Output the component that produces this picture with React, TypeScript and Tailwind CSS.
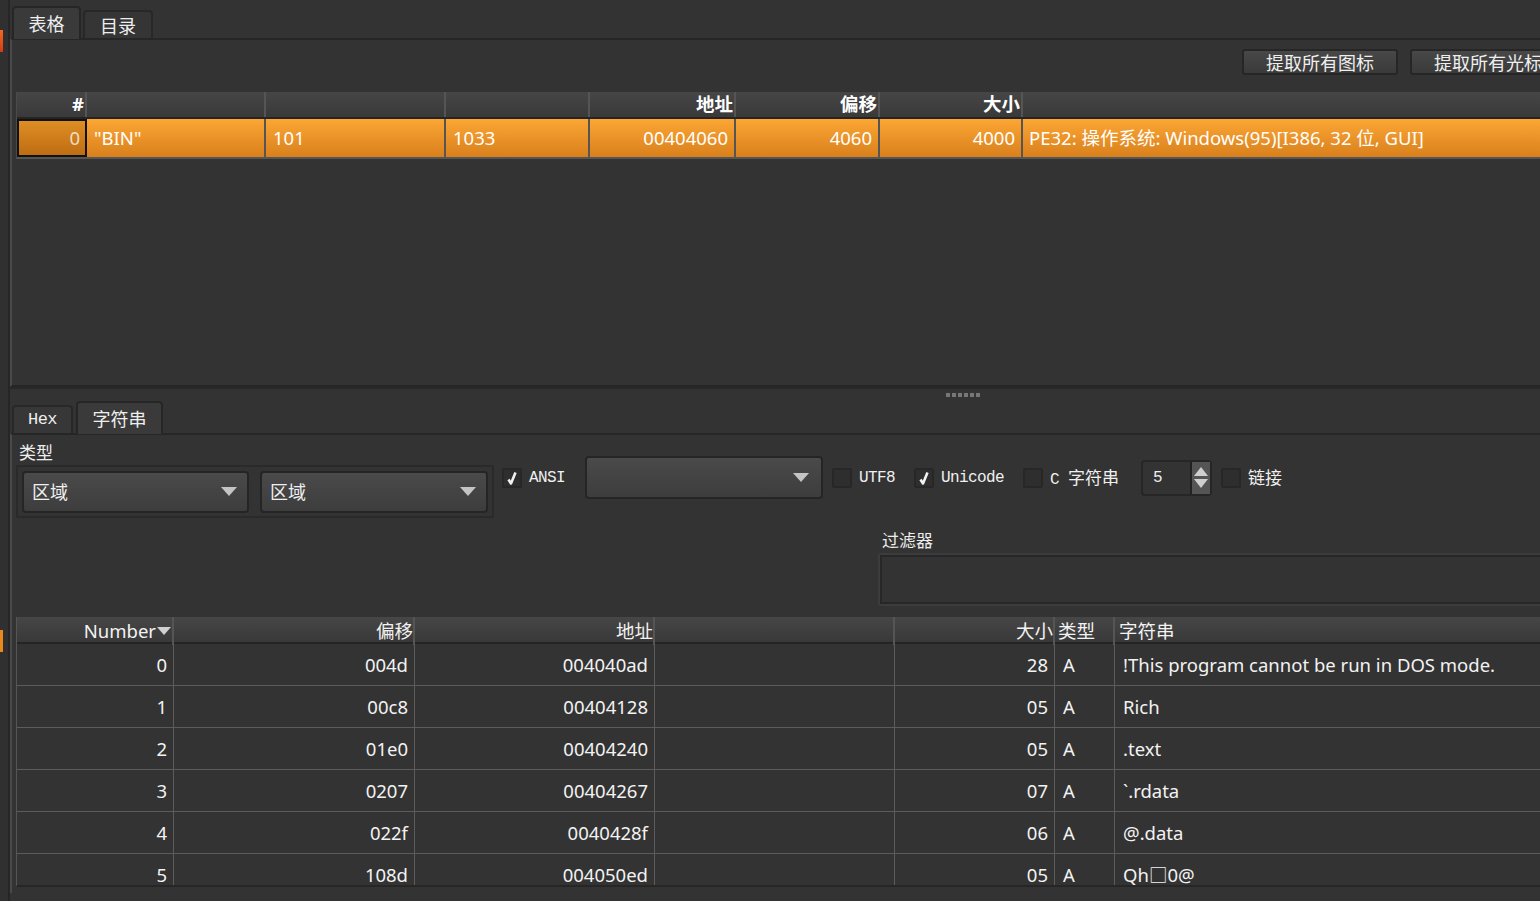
import React from "react";

const topCols = "grid-cols-[70px_179px_180px_144px_146px_144px_143px_1fr]";
const botCols = "grid-cols-[157px_241px_240px_240px_160px_60px_1fr]";

const strings = [
  { n: "0", off: "004d", addr: "004040ad", size: "28", s: "!This program cannot be run in DOS mode." },
  { n: "1", off: "00c8", addr: "00404128", size: "05", s: "Rich" },
  { n: "2", off: "01e0", addr: "00404240", size: "05", s: ".text" },
  { n: "3", off: "0207", addr: "00404267", size: "07", s: "`.rdata" },
  { n: "4", off: "022f", addr: "0040428f", size: "06", s: "@.data" },
  { n: "5", off: "108d", addr: "004050ed", size: "05", s: "Qh\u25A10@" },
];

// little tick used by the checked boxes
const Tick = () => (
  <svg width="10" height="14" viewBox="0 0 10 14">
    <path d="M1.5 8.5 L4 12.5 L8.5 1.5" stroke="#f2f2f2" strokeWidth="2.6" fill="none" strokeLinejoin="round" />
  </svg>
);

const Check = ({ checked, children }: { checked?: boolean; children: React.ReactNode }) => (
  <div className="flex items-center gap-[7px]">
    <div className="w-[20px] h-[20px] rounded-[2px] border-2 border-[#272727] bg-[#2e2e2e] flex items-center justify-center">
      {checked && <Tick />}
    </div>
    <span className="text-[16px] tracking-[-0.6px] text-[#f0f0f0] whitespace-nowrap">{children}</span>
  </div>
);

const Arrow = () => (
  <svg width="16" height="9" viewBox="0 0 16 9">
    <path d="M0 0 L16 0 L8 9 Z" fill="#c4c4c4" />
  </svg>
);

const Combo = ({ text, w }: { text: string; w: string }) => (
  <div className={`${w} h-[42px] rounded-[4px] border-2 border-[#252525] bg-gradient-to-b from-[#4a4a4a] to-[#3d3d3d] flex items-center justify-between pl-[8px] pr-[10px]`}>
    <span className="text-[18px] text-[#f0f0f0] font-['Noto_Sans_CJK_SC',sans-serif]">{text}</span>
    <Arrow />
  </div>
);

const Cjk = ({ children }: { children: React.ReactNode }) => (
  <span className="font-['Noto_Sans_CJK_SC',sans-serif] text-[17px] tracking-normal">{children}</span>
);

const App = () => {
  return (
    <div className="w-[1540px] h-[901px] bg-[#333333] flex overflow-hidden font-['Liberation_Mono','Noto_Sans_CJK_SC',monospace] text-[#eeeeee]">
      {/* left strip */}
      <div className="w-[10px] shrink-0 border-r-2 border-[#262626] bg-[#303030] flex flex-col">
        <div className="mt-[30px] w-[3px] h-[22px] bg-gradient-to-b from-[#f06a1e] to-[#d63a16]" />
        <div className="mt-[578px] w-[3px] h-[22px] bg-[#e8891e]" />
      </div>

      {/* main */}
      <div className="w-[1565px] shrink-0 flex flex-col">
        {/* top tabs */}
        <div className="h-[38px] flex items-end pl-[2px] gap-[2px]">
          <div className="w-[69px] h-[33px] rounded-t-[4px] border-2 border-b-0 border-[#262626] bg-[#3a3a3a] flex items-center justify-center font-['Noto_Sans_CJK_SC',sans-serif] text-[18px] relative top-[1px]">
            表格
          </div>
          <div className="w-[70px] h-[28px] rounded-t-[4px] border-2 border-b-0 border-[#282828] bg-[#353535] flex items-center justify-center font-['Noto_Sans_CJK_SC',sans-serif] text-[18px]">
            目录
          </div>
        </div>

        {/* top panel */}
        <div className="h-[349px] border-2 border-[#262626] border-l-[#4a4a4a] bg-[#333333] pl-[4px] flex flex-col">
          <div className="mt-[9px] h-[26px] flex justify-end gap-[12px] pr-[7px]">
            {["提取所有图标", "提取所有光标"].map((b) => (
              <div
                key={b}
                className="w-[156px] h-[26px] rounded-[3px] border-2 border-[#262626] bg-gradient-to-b from-[#484848] to-[#3a3a3a] flex items-center justify-center font-['Noto_Sans_CJK_SC',sans-serif] text-[18px] text-[#eeeeee]"
              >
                {b}
              </div>
            ))}
          </div>

          <div className="mt-[17px] border-l border-[#4a4a4a] font-['Noto_Sans','Noto_Sans_CJK_SC',sans-serif]">
            <div className={`grid ${topCols} h-[27px] bg-gradient-to-b from-[#464646] to-[#393939] border-b-2 border-[#242424] text-[18.5px] font-bold text-white`}>
              {["#", "", "", "", "地址", "偏移", "大小", ""].map((h, i) => (
                <div key={i} className="border-r-2 border-[#555555] flex items-center justify-end pr-[1px] leading-none">
                  {h}
                </div>
              ))}
            </div>
            <div className={`grid ${topCols} h-[40px] bg-gradient-to-b from-[#fca634] to-[#d9801c] border-b-2 border-[#555555] text-[18.5px] text-white`}>
              <div className="border-2 border-[#111111] bg-gradient-to-b from-[#de8e24] to-[#bf6d12] flex items-center justify-end pr-[5px] text-[#f3dcc0]">0</div>
              <div className="border-r-2 border-[#555555] flex items-center pl-[7px]">"BIN"</div>
              <div className="border-r-2 border-[#555555] flex items-center pl-[7px]">101</div>
              <div className="border-r-2 border-[#555555] flex items-center pl-[7px]">1033</div>
              <div className="border-r-2 border-[#555555] flex items-center justify-end pr-[6px]">00404060</div>
              <div className="border-r-2 border-[#555555] flex items-center justify-end pr-[6px]">4060</div>
              <div className="border-r-2 border-[#555555] flex items-center justify-end pr-[6px]">4000</div>
              <div className="flex items-center pl-[6px] whitespace-nowrap">PE32: 操作系统: Windows(95)[I386, 32 位, GUI]</div>
            </div>
          </div>
        </div>

        {/* splitter */}
        <div className="h-[13px] border-t-2 border-[#282828] flex items-center pl-[936px] gap-[2px]">
          {[0, 1, 2, 3, 4, 5].map((i) => (
            <div key={i} className="w-[4px] h-[4px] bg-[#777777]" />
          ))}
        </div>

        {/* bottom tabs */}
        <div className="h-[33px] flex items-end pl-[2px] gap-[3px]">
          <div className="w-[61px] h-[28px] rounded-t-[4px] border-2 border-b-0 border-[#282828] bg-[#373737] flex items-center justify-center text-[17px] tracking-[-0.6px]">
            Hex
          </div>
          <div className="w-[87px] h-[33px] rounded-t-[4px] border-2 border-b-0 border-[#262626] bg-[#3a3a3a] flex items-center justify-center font-['Noto_Sans_CJK_SC',sans-serif] text-[18px] relative top-[1px]">
            字符串
          </div>
        </div>

        {/* bottom panel */}
        <div className="h-[460px] border-t-2 border-l-2 border-[#262626] border-l-[#4a4a4a] pl-[4px] flex flex-col">
          <div className="flex h-[86px]">
            <div className="w-[478px] flex flex-col">
              <div className="h-[30px] pt-[4px] pl-[3px] font-['Noto_Sans_CJK_SC',sans-serif] text-[17px]">类型</div>
              <div className="h-[53px] border-2 border-[#2a2a2a] rounded-[2px] flex items-center gap-[11px] pl-[4px]">
                <Combo text="区域" w="w-[227px]" />
                <Combo text="区域" w="w-[228px]" />
              </div>
            </div>
            <div className="mt-[21px] h-[43px] flex items-center ml-[8px]">
              <Check checked>ANSI</Check>
              <div className="ml-[20px] w-[238px] h-[43px] rounded-[4px] border-2 border-[#252525] bg-gradient-to-b from-[#4a4a4a] to-[#3d3d3d] flex items-center justify-end pr-[12px]">
                <Arrow />
              </div>
              <div className="ml-[9px]"><Check>UTF8</Check></div>
              <div className="ml-[19px]"><Check checked>Unicode</Check></div>
              <div className="ml-[19px]"><Check>C <Cjk>字符串</Cjk></Check></div>
              <div className="ml-[22px] w-[71px] h-[36px] rounded-[4px] border-2 border-[#262626] bg-[#333333] flex items-stretch">
                <div className="flex-1 flex items-center pl-[10px] text-[16px]">5</div>
                <div className="w-[20px] border-l-2 border-[#222222] bg-[#555555] flex flex-col items-center justify-center gap-[3px]">
                  <svg width="14" height="9" viewBox="0 0 14 9"><path d="M0 9 L14 9 L7 0 Z" fill="#cfcfcf" /></svg>
                  <svg width="14" height="9" viewBox="0 0 14 9"><path d="M0 0 L14 0 L7 9 Z" fill="#cfcfcf" /></svg>
                </div>
              </div>
              <div className="ml-[9px]"><Check><Cjk>链接</Cjk></Check></div>
            </div>
          </div>

          {/* filter */}
          <div className="ml-[862px] mt-[8px] font-['Noto_Sans_CJK_SC',sans-serif] text-[17px] h-[22px] leading-[22px] pl-[4px]">过滤器</div>
          <div className="ml-[862px] mt-[2px] h-[53px] border-2 border-[#3c3c3c] rounded-[3px]">
            <div className="h-full border-2 border-[#272727] bg-[#333333]" />
          </div>

          {/* strings table */}
          <div className="mt-[11px] h-[270px] overflow-hidden border-l border-[#555555] border-b-2 border-b-[#262626] font-['Noto_Sans','Noto_Sans_CJK_SC',sans-serif] text-[18.5px] text-[#f2f2f2]">
            <div className={`grid ${botCols} h-[27px] bg-gradient-to-b from-[#464646] to-[#393939] border-b-2 border-[#242424]`}>
              <div className="border-r-2 border-[#555555] flex items-center justify-end gap-[1px] pr-[1px]">
                Number
                <svg width="14" height="8" viewBox="0 0 14 8"><path d="M0 0 L14 0 L7 8 Z" fill="#d0d0d0" /></svg>
              </div>
              <div className="border-r-2 border-[#555555] flex items-center justify-end">偏移</div>
              <div className="border-r-2 border-[#555555] flex items-center justify-end">地址</div>
              <div className="border-r-2 border-[#555555]" />
              <div className="border-r-2 border-[#555555] flex items-center justify-end">大小</div>
              <div className="border-r-2 border-[#555555] flex items-center pl-[3px]">类型</div>
              <div className="flex items-center pl-[4px]">字符串</div>
            </div>
            {strings.map((r) => (
              <div key={r.n} className={`grid ${botCols} h-[42px] border-b border-[#5c5c5c]`}>
                <div className="border-r border-[#5c5c5c] flex items-center justify-end pr-[6px]">{r.n}</div>
                <div className="border-r border-[#5c5c5c] flex items-center justify-end pr-[6px]">{r.off}</div>
                <div className="border-r border-[#5c5c5c] flex items-center justify-end pr-[6px]">{r.addr}</div>
                <div className="border-r border-[#5c5c5c]" />
                <div className="border-r border-[#5c5c5c] flex items-center justify-end pr-[6px]">{r.size}</div>
                <div className="border-r border-[#5c5c5c] flex items-center pl-[8px]">A</div>
                <div className="flex items-center pl-[8px] whitespace-nowrap">{r.s}</div>
              </div>
            ))}
          </div>
        </div>
      </div>
    </div>
  );
};

export default App;
